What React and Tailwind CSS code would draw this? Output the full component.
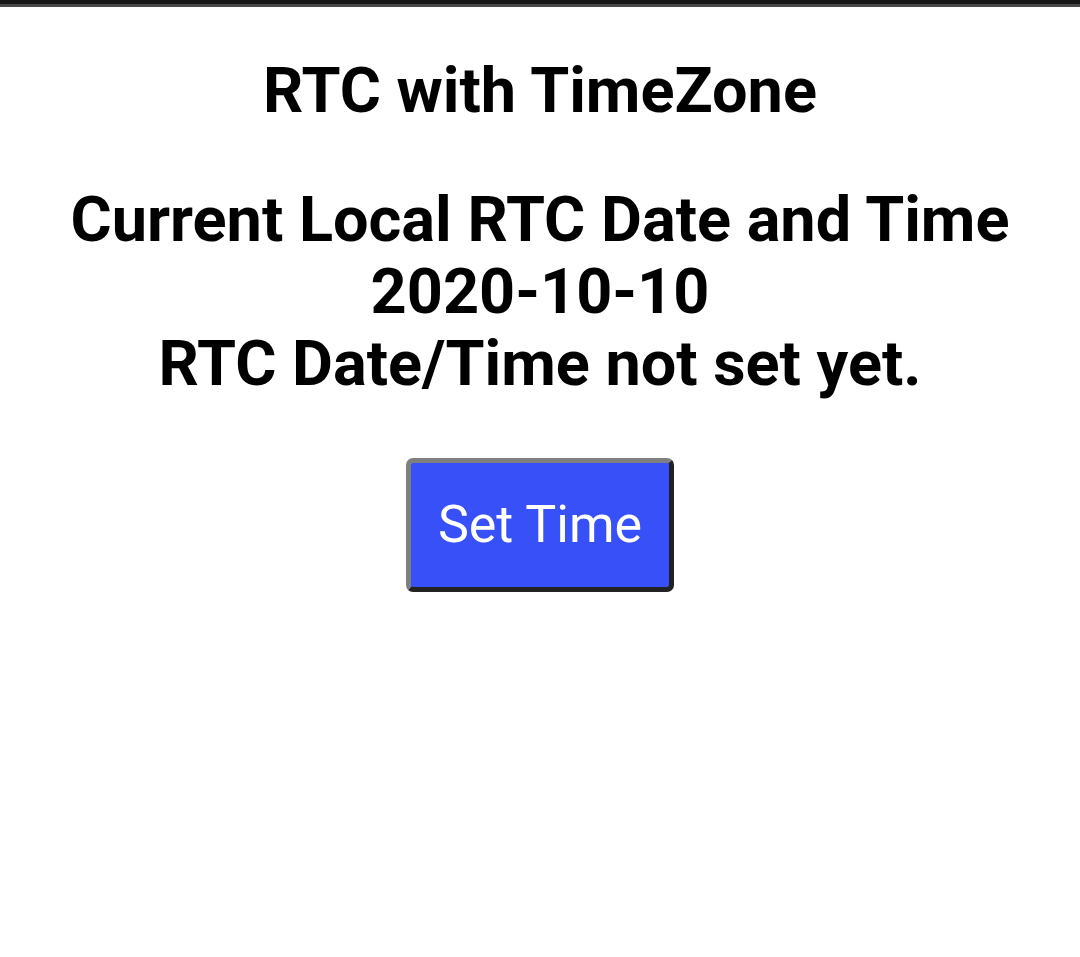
export default function App() {
  return (
    <div className="min-h-[957px] bg-white font-['Roboto',sans-serif] text-black">
      {/* status strip */}
      <div className="h-[4px] bg-[#171717]" />
      <div className="h-[3px] bg-[#474747]" />

      <div className="flex flex-col items-center text-center">
        <h1 className="mt-[48px] text-[63px] font-bold leading-[72px]">RTC with TimeZone</h1>
        <div className="mt-[57px] text-[63px] font-bold leading-[72px]">
          <p>Current Local RTC Date and Time</p>
          <p>2020-10-10</p>
          <p>RTC Date/Time not set yet.</p>
        </div>
        <button className="mt-[58px] rounded-[7px] border-[5px] border-t-[#7f7f7f] border-l-[#7f7f7f] border-r-[#222222] border-b-[#222222] bg-[#3850f8] px-[27px] py-[24px] text-[52px] leading-[76px] text-white">
          Set Time
        </button>
      </div>
    </div>
  )
}
